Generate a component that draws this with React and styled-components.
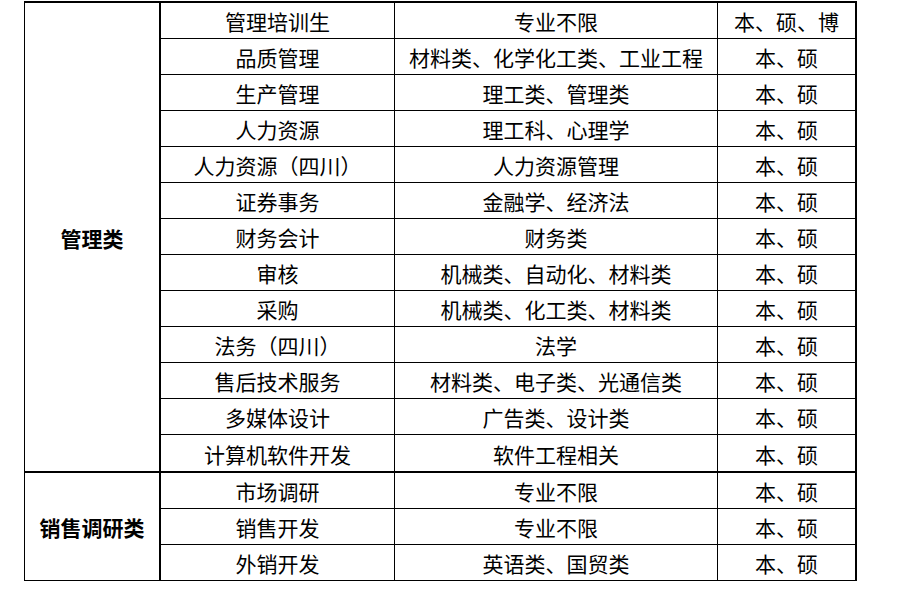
import React from "react";
import styled, { createGlobalStyle } from "styled-components";

const GlobalStyle = createGlobalStyle`
  html, body {
    margin: 0;
    padding: 0;
    background: #ffffff;
  }
  body {
    font-family: "Noto Sans CJK SC", "Noto Sans", sans-serif;
    color: #000000;
  }
`;

const Sheet = styled.div`
  margin: 1px 0 0 24px;
  width: 832px;
  border-left: 1px solid #000;
  border-top: 2px solid #000;
`;

const Group = styled.div`
  display: grid;
  grid-template-columns: 136px 234px 323px 139px;
  grid-template-rows: repeat(${(p) => p.$rows - 1}, 36px) ${(p) => p.$lastRow}px;
`;

const Cell = styled.div`
  box-sizing: border-box;
  display: flex;
  align-items: center;
  justify-content: center;
  padding-top: 2px;
  font-size: 21px;
  line-height: 1;
  white-space: nowrap;
  border-right: ${(p) => (p.$thickRight ? 2 : 1)}px solid #000;
  border-bottom: ${(p) => p.$bottom || 1}px solid #000;
`;

const Category = styled(Cell)`
  grid-column: 1;
  grid-row: 1 / span ${(p) => p.$span};
  font-weight: 700;
  border-right-width: 2px;
`;

const groups = [
  {
    name: "管理类",
    edge: 2,
    rows: [
      ["管理培训生", "专业不限", "本、硕、博"],
      ["品质管理", "材料类、化学化工类、工业工程", "本、硕"],
      ["生产管理", "理工类、管理类", "本、硕"],
      ["人力资源", "理工科、心理学", "本、硕"],
      ["人力资源（四川）", "人力资源管理", "本、硕"],
      ["证券事务", "金融学、经济法", "本、硕"],
      ["财务会计", "财务类", "本、硕"],
      ["审核", "机械类、自动化、材料类", "本、硕"],
      ["采购", "机械类、化工类、材料类", "本、硕"],
      ["法务（四川）", "法学", "本、硕"],
      ["售后技术服务", "材料类、电子类、光通信类", "本、硕"],
      ["多媒体设计", "广告类、设计类", "本、硕"],
      ["计算机软件开发", "软件工程相关", "本、硕"],
    ],
  },
  {
    name: "销售调研类",
    edge: 1,
    rows: [
      ["市场调研", "专业不限", "本、硕"],
      ["销售开发", "专业不限", "本、硕"],
      ["外销开发", "英语类、国贸类", "本、硕"],
    ],
  },
];

export default function App() {
  return (
    <>
      <GlobalStyle />
      <Sheet>
        {groups.map((g) => (
          <Group key={g.name} $rows={g.rows.length} $lastRow={g.edge === 2 ? 38 : 36}>
            <Category $span={g.rows.length} $bottom={g.edge}>
              {g.name}
            </Category>
            {g.rows.map((row, i) => {
              const last = i === g.rows.length - 1;
              return row.map((text, j) => (
                <Cell
                  key={`${i}-${j}`}
                  $thickRight={j === 2}
                  $bottom={last ? g.edge : 1}
                >
                  {text}
                </Cell>
              ));
            })}
          </Group>
        ))}
      </Sheet>
    </>
  );
}
